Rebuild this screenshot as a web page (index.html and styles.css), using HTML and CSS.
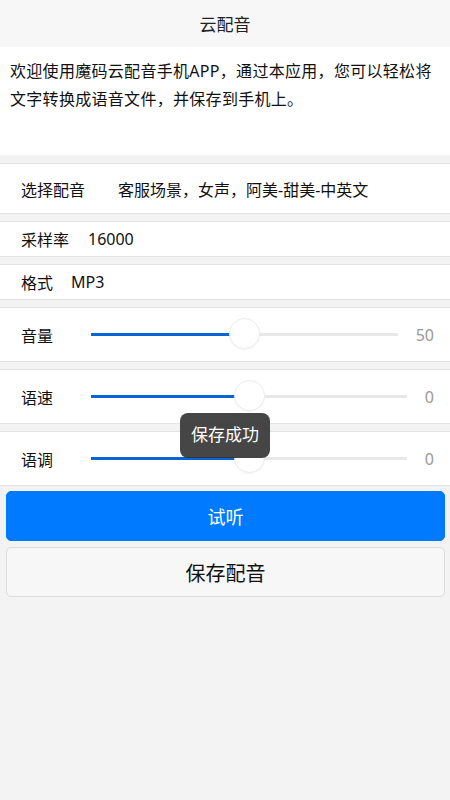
FILE: index.html
```html
<!DOCTYPE html>
<html lang="zh-CN">
<head>
    <meta charset="UTF-8">
    <meta name="viewport" content="width=device-width, initial-scale=1.0">
    <title>云配音</title>
    <link rel="stylesheet" href="styles.css">
</head>
<body>
    <header class="title-bar">云配音</header>

    <div class="intro">
        欢迎使用魔码云配音手机APP，通过本应用，您可以轻松将文字转换成语音文件，并保存到手机上。
    </div>

    <div class="row row-voice">
        <span class="label">选择配音</span>
        <span class="voice-value">客服场景，女声，阿美-甜美-中英文</span>
    </div>

    <div class="row row-small">
        <span class="label">采样率</span>
        <span class="sample-value">16000</span>
    </div>

    <div class="row row-small">
        <span class="label">格式</span>
        <span class="format-value">MP3</span>
    </div>

    <div class="row row-slider">
        <span class="slider-label">音量</span>
        <div class="slider">
            <div class="fill" style="width: 50%"></div>
            <div class="thumb" style="left: 50%"></div>
        </div>
        <span class="slider-value">50</span>
    </div>

    <div class="row row-slider">
        <span class="slider-label">语速</span>
        <div class="slider">
            <div class="fill" style="width: 50%"></div>
            <div class="thumb" style="left: 50%"></div>
        </div>
        <span class="slider-value">0</span>
    </div>

    <div class="row row-slider">
        <span class="slider-label">语调</span>
        <div class="slider">
            <div class="fill" style="width: 50%"></div>
            <div class="thumb" style="left: 50%"></div>
        </div>
        <span class="slider-value">0</span>
    </div>

    <div class="actions">
        <button class="btn btn-primary">试听</button>
        <button class="btn btn-default">保存配音</button>
    </div>

    <div class="toast">保存成功</div>
</body>
</html>
```

FILE: styles.css
```css
body {
    margin: 0;
    padding: 0;
    background-color: #f3f3f3;
    font-family: "Noto Sans", "Noto Sans CJK SC", sans-serif;
    color: #111;
    position: relative;
    min-height: 800px;
}

.title-bar {
    height: 47px;
    line-height: 49px;
    text-align: center;
    font-size: 17px;
    background-color: #f7f7f7;
    color: #222;
}

.intro {
    background-color: #fff;
    height: 88px;
    padding: 10px 8px 10px 10px;
    font-size: 16px;
    letter-spacing: 0.3px;
    line-height: 28px;
    color: #111;
    margin-bottom: 8px;
}

.row {
    display: flex;
    align-items: center;
    background-color: #fff;
    border-top: 1px solid #e3e3e3;
    border-bottom: 1px solid #e3e3e3;
    padding-left: 21px;
    font-size: 16px;
    margin-bottom: 7px;
}

.row-voice {
    height: 49px;
}

.voice-value {
    margin-left: 33px;
}

.row-small {
    height: 34px;
}

.sample-value {
    margin-left: 19px;
}

.format-value {
    margin-left: 18px;
}

.row-slider {
    height: 53px;
}

.slider-label {
    width: 70px;
    flex-shrink: 0;
}

.slider {
    flex: 1;
    height: 3px;
    background-color: #e8e8e8;
    position: relative;
}

.fill {
    height: 100%;
    background-color: #0a64d6;
}

.thumb {
    position: absolute;
    top: -15px;
    width: 31px;
    height: 31px;
    margin-left: -15px;
    border-radius: 50%;
    background-color: #fff;
    border: 1px solid #ececec;
    box-sizing: border-box;
    box-shadow: 0 1px 2px rgba(0, 0, 0, 0.04);
}

.slider-value {
    margin-left: 18px;
    margin-right: 16px;
    color: #999;
    font-size: 16px;
}

.actions {
    display: flex;
    flex-direction: column;
    gap: 6px;
    padding: 0 5px 0 6px;
    margin-top: -2px;
}

.btn {
    width: 100%;
    border-radius: 5px;
    font-family: "Noto Sans", "Noto Sans CJK SC", sans-serif;
    cursor: pointer;
}

.btn-primary {
    height: 50px;
    background-color: #007aff;
    border: 1px solid #007aff;
    color: #fff;
    font-size: 18px;
}

.btn-default {
    height: 50px;
    background-color: #f7f7f7;
    border: 1px solid #dcdcdc;
    color: #111;
    font-size: 20px;
}

.toast {
    position: absolute;
    left: 180px;
    top: 413px;
    width: 90px;
    height: 45px;
    line-height: 44px;
    text-align: center;
    border-radius: 8px;
    background-color: rgba(50, 50, 50, 0.9);
    color: #fff;
    font-size: 17px;
}
```
